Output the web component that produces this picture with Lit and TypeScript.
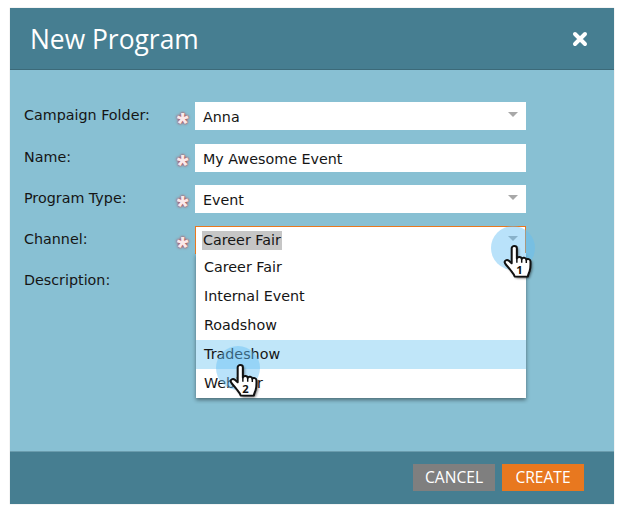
import { LitElement, html, css, svg } from "lit";
import { customElement } from "lit/decorators.js";

const handPath = "M9.500 3.200c0-3 4.600-3 4.600 0v9.600c.4-2 4.100-2 4.300.4.600-1.700 3.900-1.500 4.100.8.900-1.300 3.700-.8 3.700 1.500 0 3.400.3 6.400-.8 9.400-.8 2.300-1.500 3.700-1.500 5.100H12.200c-.5-2.400-2.200-4-4-6.500-1.600-2.200-3.700-4.500-4.600-6.200-1.200-2.300 1.500-4 3.400-2.300l2.500 2.400z";

const hand = (n: string) => svg`<svg class="hand-svg" viewBox="0 0 32 38" width="36" height="40" preserveAspectRatio="none">
  <defs><filter id="s${n}" x="-30%" y="-30%" width="160%" height="160%"><feGaussianBlur stdDeviation="1.2"/></filter></defs>
  <path d=${handPath} fill="#000" opacity=".6" filter="url(#s${n})" transform="translate(1.200 1.500)"/>
  <path d=${handPath} fill="#fff" stroke="#111" stroke-width="1.800" stroke-linejoin="round"/>
  <path d="M14.100 12.800v4M18.400 13.200v3.600M22.500 14v3" stroke="#111" stroke-width="1.300" fill="none"/>
  <text x="16.500" y="28" text-anchor="middle" class="hand-num">${n}</text>
</svg>`;

const caret = html`<svg class="caret" viewBox="0 0 10 5" width="10" height="5"><path d="M0 0h10L5 5z" fill="#a8a8a8"/></svg>`;
const star = html`<span class="star">*</span>`;

@customElement("app-root")
export class AppRoot extends LitElement {
  static styles = css`
    :host {
      display: block;
      width: 622px;
      height: 513px;
      background: #fff;
      font-family: "DejaVu Sans", "Noto Sans", sans-serif;
      color: #151515;
      padding: 8px 8px 9px 10px;
      box-sizing: border-box;
    }
    .dialog {
      height: 496px;
      display: flex;
      flex-direction: column;
      background: #88c0d3;
      position: relative;
      box-shadow: 0 0 1px rgba(0, 0, 0, 0.25);
    }
    .head {
      height: 62px;
      flex: none;
      background: #467e91;
      border-bottom: 1px solid #3c6a79;
      display: flex;
      align-items: center;
      justify-content: space-between;
      padding: 0 26px 0 20px;
      box-sizing: border-box;
    }
    .title {
      color: #fff;
      font-family: "Open Sans", sans-serif;
      font-size: 26.400px;
      line-height: 36px;
      margin-top: 1px;
    }
    .close { display: block; }
    .body {
      flex: 1;
      padding: 32px 88px 0 14px;
      display: flex;
      flex-direction: column;
      gap: 13px;
    }
    .row {
      display: grid;
      grid-template-columns: 147px 24px 1fr;
      align-items: center;
      height: 28px;
      font-size: 14.300px;
    }
    .row.first { margin-bottom: 1px; }
    .row label { margin-top: -2px; }
    .star {
      color: #fbe9ea;
      font-size: 30px;
      line-height: 30px;
      height: 28px;
      text-align: center;
      font-family: "Liberation Sans", sans-serif;
      font-weight: 700;
      padding-top: 6px;
      padding-right: 1px;
      box-sizing: border-box;
      text-shadow: 0 0 3px #b04a55, 0 0 2px #b04a55;
    }
    .field {
      height: 28px;
      background: #fff;
      display: flex;
      align-items: center;
      justify-content: space-between;
      padding: 2px 8px 0 8px;
      box-sizing: border-box;
    }
    .caret { display: block; margin-top: -5px; }
    .field.open {
      border: 1px solid #e8781f;
      border-bottom: 0;
      padding: 0 7px 0 6px;
    }
    .sel { background: #c6c6c6; line-height: 19px; padding: 0 1px; }
    .foot {
      height: 53px;
      flex: none;
      background: #467e91;
      border-top: 1px solid #6a9cad;
      box-sizing: border-box;
      display: flex;
      align-items: center;
      justify-content: flex-end;
      gap: 7px;
      padding: 0 30px 2px 0;
    }
    .btn {
      height: 27px;
      display: flex;
      align-items: center;
      justify-content: center;
      color: #fff;
      font-family: "Open Sans", sans-serif;
      font-size: 15.600px;
    }
    .cancel { width: 82px; background: #7f7f7f; }
    .create { width: 82px; background: #e8781f; }
    .menu {
      position: absolute;
      left: 186px;
      top: 245px;
      width: 330px;
      background: #fff;
      box-shadow: 0 2px 4px rgba(0, 0, 0, 0.45);
      clip-path: inset(0 -6px -6px -6px);
      font-size: 14.300px;
    }
    .item {
      height: 29px;
      line-height: 29px;
      padding-left: 8px;
    }
    .item.hot { background: #c0e6f9; }
    .spot {
      position: absolute;
      width: 44px;
      height: 44px;
      border-radius: 50%;
      background: rgba(100, 190, 245, 0.45);
    }
    .spot1 { left: 481px; top: 218px; }
    .spot2 { left: 206px; top: 338px; }
    .hand { position: absolute; }
    .hand1 { left: 491px; top: 237px; }
    .hand2 { left: 217px; top: 356px; }
    .hand-svg { display: block; }
    .hand-num {
      font-family: "Open Sans", sans-serif;
      font-size: 10px;
      font-weight: 700;
      fill: #111;
    }
  `;

  render() {
    return html`
      <div class="dialog">
        <div class="head">
          <div class="title">New Program</div>
          <svg class="close" viewBox="0 0 16 16" width="16" height="16">
            <path d="M3 3l10 10M13 3L3 13" stroke="#fff" stroke-width="4" stroke-linecap="round" />
          </svg>
        </div>
        <div class="body">
          <div class="row first"><label>Campaign Folder:</label>${star}<div class="field">Anna${caret}</div></div>
          <div class="row"><label>Name:</label>${star}<div class="field">My Awesome Event</div></div>
          <div class="row"><label>Program Type:</label>${star}<div class="field">Event${caret}</div></div>
          <div class="row"><label>Channel:</label>${star}<div class="field open"><span class="sel">Career Fair</span>${caret}</div></div>
          <div class="row"><label>Description:</label></div>
        </div>
        <div class="foot">
          <div class="btn cancel">CANCEL</div>
          <div class="btn create">CREATE</div>
        </div>
        <div class="menu">
          <div class="item">Career Fair</div>
          <div class="item">Internal Event</div>
          <div class="item">Roadshow</div>
          <div class="item hot">Tradeshow</div>
          <div class="item">Webinar</div>
        </div>
        <div class="spot spot1"></div>
        <div class="spot spot2"></div>
        <div class="hand hand1">${hand("1")}</div>
        <div class="hand hand2">${hand("2")}</div>
      </div>
    `;
  }
}
